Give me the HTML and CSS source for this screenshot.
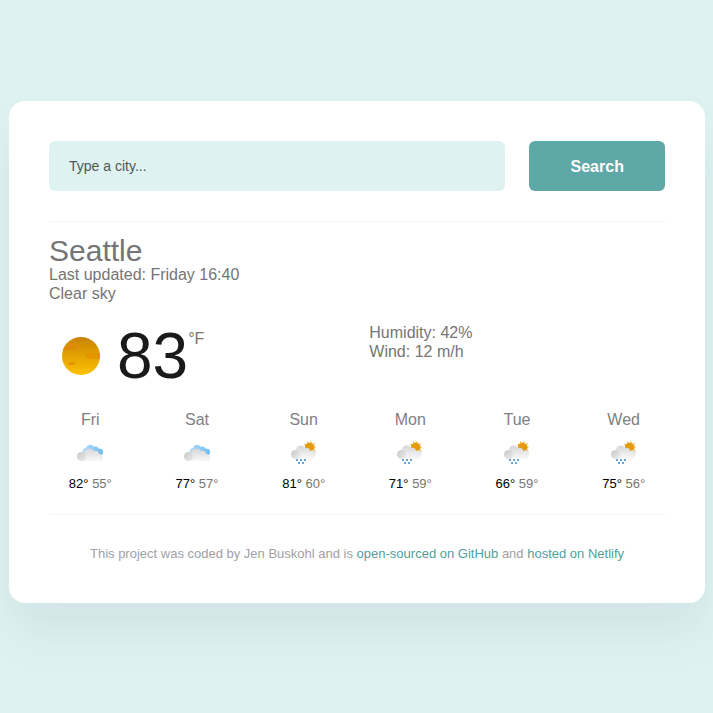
FILE: index.html
```html
<!DOCTYPE html>
<html lang="en">
<head>
<meta charset="utf-8">
<meta name="viewport" content="width=device-width, initial-scale=1">
<title>Weather</title>
<link rel="stylesheet" href="styles.css">
</head>
<body>
<svg class="defs" aria-hidden="true">
  <defs>
    <linearGradient id="sunFill" x1="0" y1="0" x2="0" y2="1"><stop offset="0" stop-color="#c98305"/><stop offset="1" stop-color="#fcc300"/></linearGradient>
    <linearGradient id="cloudFill" x1="0" y1="0" x2="0" y2="1"><stop offset="0" stop-color="#d6d6d8"/><stop offset="1" stop-color="#f9f9f9"/></linearGradient>
    <linearGradient id="puffFill" x1="0" y1="0" x2="1" y2="1"><stop offset="0" stop-color="#c8c8ca"/><stop offset="1" stop-color="#ebebeb"/></linearGradient>
    <linearGradient id="blueFill" x1="0" y1="0" x2="1" y2="0"><stop offset="0" stop-color="#b5defb"/><stop offset="1" stop-color="#6cbdf5"/></linearGradient>
    <symbol id="cloudy" viewBox="0 0 40 40">
      <path fill="url(#blueFill)" d="M12 20c0-3 2-5 4-5 1-4 6-4 8-1 2-1 4 0 5 2 3-1 4 1 4 3 0 2-1 4-3 4H14z"/>
      <path fill="url(#cloudFill)" d="M12 28V19c1 0 2 0 2 1 1-5 8-6 10-2 3-1 5 1 5 3 3 0 4 1 4 3v4z"/>
      <circle cx="11.500" cy="23.500" r="4.500" fill="url(#puffFill)"/>
    </symbol>
    <symbol id="showers" viewBox="0 0 40 40">
      <path fill="#f3b94a" d="M20 11l3 0 0-3 2 2 2-2 1 3 3-1-1 3 2 1-2 2 2 3-3 0-1 2-3-1z"/>
      <circle cx="25.500" cy="14.500" r="4.500" fill="#e49b0a"/>
      <path fill="url(#cloudFill)" d="M12 26V17c0-5 7-6 9-2 3-1 5 1 5 3 4-2 6 1 6 3 0 3-2 5-5 5z"/>
      <circle cx="11.500" cy="21.500" r="4.500" fill="url(#puffFill)"/>
      <g fill="#68a4d8"><rect x="12" y="26" width="2" height="2"/><rect x="16" y="26" width="2" height="2"/><rect x="20" y="26" width="2" height="2"/><rect x="14" y="29" width="2" height="2"/><rect x="18" y="29" width="2" height="2"/></g>
    </symbol>
  </defs>
</svg>
<main class="card">
  <form class="search">
    <input class="search-input" type="search" placeholder="Type a city..." aria-label="City">
    <button class="search-button" type="submit">Search</button>
  </form>
  <section class="overview">
    <h1 class="city">Seattle</h1>
    <ul class="details">
      <li>Last updated: Friday 16:40</li>
      <li>Clear sky</li>
    </ul>
    <div class="current">
      <div class="temperature">
        <svg class="sun" viewBox="0 0 38 38" role="img" aria-label="Clear">
          <clipPath id="disc"><circle cx="19" cy="19" r="19"/></clipPath>
          <g clip-path="url(#disc)">
            <rect width="38" height="38" fill="url(#sunFill)"/>
            <rect x="-3" y="6" width="19" height="7" rx="3" fill="#dd8d05"/>
            <rect x="24" y="16" width="18" height="6" rx="3" fill="#e69300"/>
            <rect x="6" y="25" width="7" height="3" rx="1" fill="#e69300"/>
          </g>
        </svg>
        <span class="degrees">83</span><span class="unit">°F</span>
      </div>
      <ul class="details">
        <li>Humidity: 42%</li>
        <li>Wind: 12 m/h</li>
      </ul>
    </div>
  </section>
  <section class="forecast">
    <div class="day"><div class="day-name">Fri</div><svg class="day-icon"><use href="#cloudy"/></svg><div class="range"><span class="high">82°</span> 55°</div></div>
    <div class="day"><div class="day-name">Sat</div><svg class="day-icon"><use href="#cloudy"/></svg><div class="range"><span class="high">77°</span> 57°</div></div>
    <div class="day"><div class="day-name">Sun</div><svg class="day-icon"><use href="#showers"/></svg><div class="range"><span class="high">81°</span> 60°</div></div>
    <div class="day"><div class="day-name">Mon</div><svg class="day-icon"><use href="#showers"/></svg><div class="range"><span class="high">71°</span> 59°</div></div>
    <div class="day"><div class="day-name">Tue</div><svg class="day-icon"><use href="#showers"/></svg><div class="range"><span class="high">66°</span> 59°</div></div>
    <div class="day"><div class="day-name">Wed</div><svg class="day-icon"><use href="#showers"/></svg><div class="range"><span class="high">75°</span> 56°</div></div>
  </section>
  <footer class="credits">This project was coded by Jen Buskohl and is <a href="#github">open-sourced on GitHub</a> and <a href="#netlify">hosted on Netlify</a></footer>
</main>
</body>
</html>
```
FILE: styles.css
```css
* { box-sizing: border-box; }

body {
  min-height: 100vh;
  margin: 0;
  padding: 101px 8px 0 9px;
  background: #def3f1;
  color: #757575;
  font: 16px/19px "Liberation Sans", Arial, sans-serif;
}

.defs { position: absolute; width: 0; height: 0; }

.card {
  max-width: 800px;
  margin: 0 auto;
  padding: 40px;
  border-radius: 16px;
  background: #fff;
  box-shadow: 0 30px 50px rgba(65, 50, 100, 0.08);
}

.search {
  display: flex;
  gap: 24px;
  padding-bottom: 30px;
  border-bottom: 1px solid #f3f6f8;
}

.search-input,
.search-button {
  height: 50px;
  border: 0;
  border-radius: 6px;
  font-family: inherit;
}

.search-input {
  flex: 1;
  min-width: 0;
  padding: 0 20px;
  appearance: none;
  background: #def3f1;
  font-size: 14px;
}

.search-input::placeholder { color: #505656; opacity: 1; }

.search-button {
  width: 22%;
  padding-top: 3px;
  background: #5ea8a7;
  color: #fff;
  font-size: 16px;
  font-weight: 700;
}

.overview { padding-top: 15px; }

.city {
  margin: 0;
  font-size: 30px;
  font-weight: 400;
  line-height: 28px;
}

.details { margin: 0; padding: 0; list-style: none; }

.current {
  display: grid;
  grid-template-columns: 52% 48%;
  padding-top: 20px;
}

.temperature {
  display: flex;
  align-items: flex-start;
  padding-left: 13px;
}

.sun { width: 38px; height: 38px; margin: 14px 17px 0 0; }

.degrees { color: #1a1a1a; font-size: 64px; line-height: 66px; }

.unit { padding-top: 6px; }

.forecast {
  display: grid;
  grid-template-columns: repeat(6, 1fr);
  column-gap: 24px;
  padding: 21px 0;
  border-bottom: 1px solid #f3f6f8;
  text-align: center;
}

.day-name { color: #808080; }

.day-icon { display: block; width: 40px; height: 40px; margin: 4px auto 1px; }

.range { font-size: 13px; white-space: nowrap; }

.high { color: #000; }

.credits { padding-top: 29px; color: #a0a0a8; font-size: 13px; text-align: center; }

.credits a { color: #4f9f9e; text-decoration: none; }
```
